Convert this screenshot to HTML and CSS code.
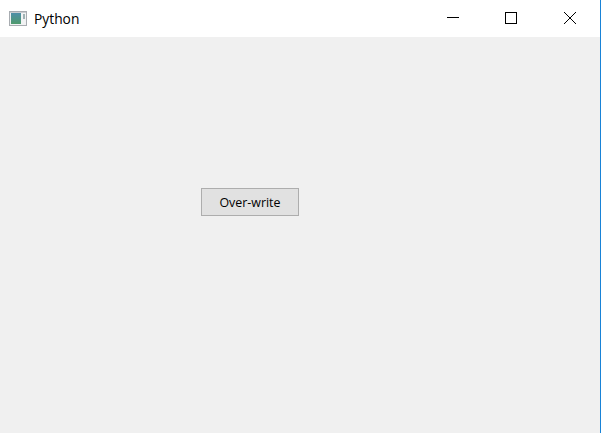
FILE: index.html
```html
<!DOCTYPE html>
<html lang="en">
<head>
<meta charset="utf-8">
<title>Python</title>
<link rel="stylesheet" href="styles.css">
</head>
<body>
<div class="window">
  <header class="titlebar">
    <svg class="app-icon" width="18" height="15" viewBox="0 0 18 15" aria-hidden="true">
      <defs>
        <linearGradient id="pane" x1="0" y1="0" x2="0" y2="1">
          <stop offset="0" stop-color="#4f8fa8"/>
          <stop offset="1" stop-color="#4f9a6c"/>
        </linearGradient>
      </defs>
      <rect x="0.5" y="0.5" width="17" height="14" fill="#f1f2f3" stroke="#a8acb1"/>
      <rect x="1" y="1" width="16" height="1" fill="#c9ccd0"/>
      <rect x="2" y="2" width="10" height="11" fill="url(#pane)"/>
      <rect x="14" y="3" width="2" height="5" fill="#a0b2b4"/>
    </svg>
    <span class="title">Python</span>
    <div class="controls">
      <button class="control" aria-label="Minimize">
        <svg width="12" height="12" viewBox="0 0 12 12"><path d="M0 5.5H12" stroke="#000" fill="none"/></svg>
      </button>
      <button class="control" aria-label="Maximize">
        <svg width="12" height="12" viewBox="0 0 12 12"><rect x="0.5" y="0.5" width="11" height="11" stroke="#000" fill="none"/></svg>
      </button>
      <button class="control control-close" aria-label="Close">
        <svg width="12" height="12" viewBox="0 0 12 12"><path d="M0 0L12 12M12 0L0 12" stroke="#000" fill="none"/></svg>
      </button>
    </div>
  </header>
  <main class="content">
    <button class="push">Over-write</button>
  </main>
</div>
</body>
</html>
```
FILE: styles.css
```css
html, body {
  margin: 0;
  height: 100%;
}
body {
  overflow: hidden;
  font-family: "Open Sans", "Noto Sans", sans-serif;
}
.window {
  box-sizing: border-box;
  width: 601px;
  height: 433px;
  display: flex;
  flex-direction: column;
  border-right: 1px solid #1883d7;
  background: #f0f0f0;
}
.titlebar {
  height: 37px;
  flex: none;
  display: flex;
  align-items: center;
  background: #fff;
  padding-left: 9px;
}
.app-icon {
  flex: none;
}
.title {
  margin-left: 7px;
  font-size: 13.8px;
  color: #000;
}
.controls {
  margin-left: auto;
  align-self: flex-start;
  display: flex;
}
.control {
  width: 58px;
  height: 36px;
  padding: 0;
  border: 0;
  background: transparent;
  display: flex;
  align-items: center;
  justify-content: center;
}
.control-close {
  width: 60px;
}
.content {
  flex: 1;
  padding: 151px 0 0 201px;
}
.push {
  display: block;
  box-sizing: border-box;
  width: 98px;
  height: 28px;
  padding: 0;
  border: 1px solid #adadad;
  background: #e1e1e1;
  color: #000;
  font-family: inherit;
  font-size: 12.4px;
}
```
